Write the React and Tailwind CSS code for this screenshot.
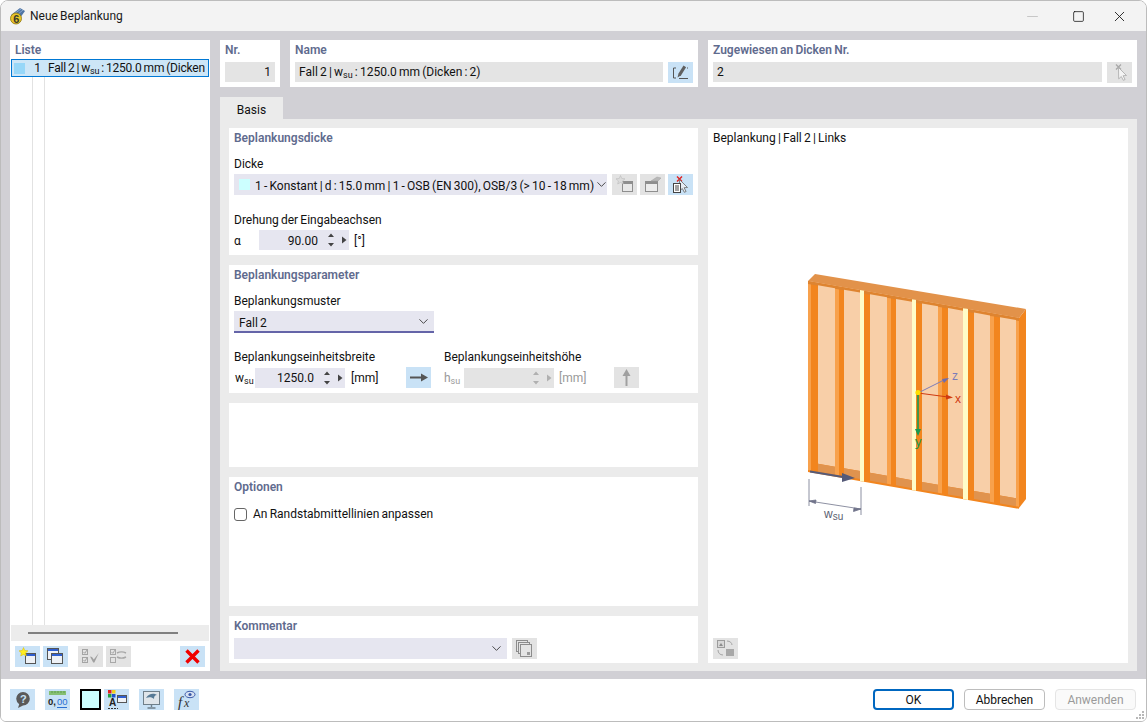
import React from "react";
import { ChevronDown, X, Minus, Square } from "lucide-react";

const y0 = (x) => 281 + (x - 808) * 0.1754;
const yb = (x) => 471 + (x - 808) * 0.1745;
const band = (a, b, t, e) =>
  `${a},${y0(a) + t} ${b},${y0(b) + t} ${b},${yb(b) + e} ${a},${yb(a) + e}`;
const recess = (a, b) =>
  `${a},${yb(a) - 9} ${b},${yb(b) - 9} ${b},${yb(b) - 1} ${a},${yb(a) - 1}`;

const sheets = [
  [818, 835],
  [844, 860],
  [870, 887],
  [896, 912],
  [922, 938],
  [948, 963],
  [974, 990],
  [1000, 1016],
];
const lightStuds = [
  [808, 811],
  [835, 839],
  [887, 891],
  [938, 942],
  [990, 994],
  [1016, 1019],
];
const gaps = [
  [860, 864],
  [912, 916],
  [963, 968],
];

const Wall = () => (
  <svg width="250" height="270" viewBox="793 260 250 270">
    <polygon points={band(808, 1019, 0, 1)} fill="#f2851e" />
    <polygon points="1019,318 1026,309 1026,499 1019,508" fill="#f2851e" />
    <polygon points="808,281 815,274 1026,309 1019,318" fill="#e2924a" />
    <polygon points="808,281 1019,318 1019,321 808,284" fill="#de8430" />
    {lightStuds.map(([a, b]) => (
      <polygon key={a} points={band(a, b, 3, -1)} fill="#f8a14c" />
    ))}
    {sheets.map(([a, b]) => (
      <g key={a}>
        <polygon points={band(a, b, 2.5, -9)} fill="#f8cfa8" />
        <polygon points={recess(a, b)} fill="#e0934e" />
      </g>
    ))}
    {gaps.map(([a, b]) => (
      <polygon key={a} points={band(a, b, 0, 1)} fill="#fffcc8" />
    ))}
    <line x1="810" y1="471.5" x2="846" y2="477.5" stroke="#555a78" strokeWidth="2" />
    <polygon points="842,473 855,478 842,482" fill="#555a78" />
    <line x1="918" y1="393" x2="946" y2="379" stroke="#7c7cb8" strokeWidth="1" />
    <polygon points="949,378 942,379 944,383" fill="#6c6cae" />
    <text x="952" y="380" fontSize="12" fill="#7c7cb8" fontFamily="Liberation Sans, sans-serif">z</text>
    <line x1="918" y1="393" x2="948" y2="397" stroke="#d03a10" strokeWidth="1" />
    <polygon points="953,397.5 946,394.5 946,399.5" fill="#d03a10" />
    <text x="955" y="403" fontSize="12" fill="#d03a10" fontFamily="Liberation Sans, sans-serif">x</text>
    <line x1="918" y1="393" x2="918" y2="430" stroke="#1a9a50" strokeWidth="1.6" />
    <polygon points="915,429 921,429 918,436" fill="#1a9a50" />
    <text x="915" y="446" fontSize="13" fill="#1a9a50" fontFamily="Liberation Sans, sans-serif">y</text>
    <circle cx="918" cy="392.5" r="2.6" fill="#ffdf00" />
    <g stroke="#70738a" strokeWidth="0.8" fill="#70738a">
      <line x1="809" y1="479" x2="809" y2="506" />
      <line x1="861" y1="487" x2="861" y2="515" />
      <line x1="809" y1="501" x2="861" y2="509" />
      <polygon points="809,501 816,500 815.5,503.5" />
      <polygon points="861,509 854,508 853.5,511.5" />
    </g>
    <text x="824" y="518" fontSize="12" fill="#5c5f72" fontFamily="Liberation Sans, sans-serif">
      w<tspan fontSize="10" dy="1.5">su</tspan>
    </text>
  </svg>
);

const Ic = ({ children }) => (
  <svg width="25" height="21" viewBox="0 0 25 21">
    {children}
  </svg>
);

const NewWin = ({ gray }) => (
  <Ic>
    <rect x="10.5" y="7.5" width="10" height="10" fill={gray ? "#e8e8e8" : "#eef1f6"} stroke={gray ? "#8e8e8e" : "#555"} />
    <rect x="11" y="8" width="9" height="2" fill={gray ? "#8e8e8e" : "#2f5fd0"} />
    <path
      d="M8.5 1.5l1.3 3 3.2.3-2.4 2.1.7 3.1-2.8-1.6-2.8 1.6.7-3.1L4 4.8l3.2-.3z"
      fill={gray ? "#dcdcdc" : "#ffee20"}
      stroke={gray ? "#b4b4b4" : "#d8b800"}
      strokeWidth="0.5"
    />
  </Ic>
);

const CopyWin = () => (
  <Ic>
    <rect x="4.5" y="2.5" width="11" height="11" fill="#eef1f6" stroke="#555" />
    <rect x="5" y="3" width="10" height="2" fill="#2f5fd0" />
    <rect x="8.5" y="7.5" width="11" height="10" fill="#eef1f6" stroke="#555" />
    <rect x="9" y="8" width="10" height="2" fill="#2f5fd0" />
  </Ic>
);

const CheckAll = () => (
  <Ic>
    <g fill="none" stroke="#a4a4a4">
      <rect x="4.5" y="3.5" width="5" height="5" />
      <rect x="4.5" y="11.5" width="5" height="5" />
      <path d="M5.5 6l1.3 1.3 2.4-3.6M5.5 14l1.3 1.3 2.4-3.6" />
    </g>
    <path d="M12 10.5l2 .5 1.8 2.4 5-6.4-4.4 9.5h-1.2z" fill="#a0a0a0" />
  </Ic>
);

const CheckSwap = () => (
  <Ic>
    <g fill="none" stroke="#a8a8a8">
      <rect x="4.5" y="3.5" width="5" height="5" />
      <rect x="4.5" y="11.5" width="5" height="5" />
      <path d="M5.5 6l1.3 1.3 2.4-3.6" />
      <path d="M11 7c3-1.5 6-1.5 9 0M20 11c-3 1.5-6 1.5-9 0" strokeWidth="1.4" />
    </g>
  </Ic>
);

const RedX = () => (
  <Ic>
    <path d="M6.5 4.5l12 12M18.5 4.5l-12 12" stroke="#f00000" strokeWidth="3.4" />
  </Ic>
);

const Pencil = () => (
  <Ic>
    <path d="M8 6H5.5v10H8" fill="none" stroke="#555" />
    <path d="M11 16.5h9" stroke="#555" />
    <path d="M9.5 15.5l1-4 5-8 2.6 1.8-5 8z" fill="#606060" />
    <path d="M19 6h1" stroke="#555" />
  </Ic>
);

const CursorX = ({ red }) => (
  <g>
    <path d="M9 2.5l5 5M14 2.5l-5 5" stroke={red ? "#e02020" : "#a8a8a8"} strokeWidth="1.4" />
    <path d="M11.5 5.5l8 8-3.4.2 2 3.8-1.8.8-2-3.8-2.6 2.4z" fill={red ? "#e6edf5" : "#f4f4f4"} stroke={red ? "#666" : "#a8a8a8"} strokeWidth="0.8" />
  </g>
);

const CursorBtn = () => (
  <Ic>
    <CursorX />
  </Ic>
);

const PickDoc = () => (
  <Ic>
    <CursorX red />
    <rect x="5.5" y="9.5" width="7" height="9" fill="#fff" stroke="#444" />
    <path d="M7 12h4M7 14h4M7 16h4" stroke="#444" />
  </Ic>
);

const EditWin = () => (
  <Ic>
    <rect x="5.5" y="7.5" width="12" height="10" fill="#ececec" stroke="#8e8e8e" />
    <rect x="6" y="8" width="11" height="2" fill="#8e8e8e" />
    <path d="M11 7l6-4 4 1-3 3z" fill="#b8b8b8" stroke="#a0a0a0" strokeWidth="0.5" />
  </Ic>
);

const ArrowRight = () => (
  <Ic>
    <path d="M4 10.5h13" stroke="#555" strokeWidth="2" />
    <path d="M15 6.5l7 4-7 4z" fill="#555" />
  </Ic>
);

const ArrowUp = () => (
  <Ic>
    <path d="M12.5 7v12" stroke="#a0a0a0" strokeWidth="2" />
    <path d="M8.5 9l4-7 4 7z" fill="#a0a0a0" />
  </Ic>
);

const Stack = () => (
  <Ic>
    <g fill="#e4e4e4" stroke="#8c8c8c">
      <rect x="4.5" y="2.5" width="11" height="11" />
      <rect x="6.5" y="4.5" width="11" height="11" />
      <rect x="8.5" y="6.5" width="11" height="12" />
    </g>
    <rect x="15" y="14" width="3" height="3" fill="#9a9a9a" />
  </Ic>
);

const Views = () => (
  <Ic>
    <rect x="4.5" y="2.5" width="7" height="7" fill="#d8d8d8" stroke="#9c9c9c" />
    <path d="M6 8l2-3 2 3z" fill="#8c8c8c" />
    <path d="M14 3c3 0 5 2 5 4M5 12c0 3 2 5 5 5" fill="none" stroke="#a4a4a4" />
    <rect x="13" y="11" width="8" height="7" fill="#a8a8a8" />
  </Ic>
);

const Help = () => (
  <Ic>
    <path d="M13 3a6.8 6.8 0 016.8 6.8A6.8 6.8 0 0113 16.6l-5 2.4 1.2-3.8a6.8 6.8 0 01-3-5.4A6.8 6.8 0 0113 3z" fill="#5a5a5a" />
    <text x="10" y="14" fontSize="11" fontWeight="700" fill="#c9e2f6" fontFamily="Liberation Sans, sans-serif">?</text>
  </Ic>
);

const Decimals = () => (
  <Ic>
    <rect x="4" y="2" width="17" height="4" fill="#86bf72" />
    <path d="M7 2v2M10 2v2M13 2v2M16 2v2M19 2v2" stroke="#5f9c4c" />
    <text x="3" y="16" fontSize="9.5" fontWeight="700" fill="#222" fontFamily="Liberation Sans, sans-serif">0,</text>
    <text x="12" y="16" fontSize="9.5" fill="#2a6fd0" fontFamily="Liberation Sans, sans-serif">00</text>
    <path d="M12 18.5h10" stroke="#2a6fd0" />
  </Ic>
);

const Legend = () => (
  <Ic>
    <rect x="4" y="1" width="3.5" height="3.5" fill="#e02020" />
    <rect x="8" y="1" width="3.5" height="3.5" fill="#f0d020" />
    <rect x="4" y="5" width="3.5" height="3.5" fill="#20a040" />
    <rect x="8" y="5" width="3.5" height="3.5" fill="#2050d0" />
    <text x="5" y="17" fontSize="10" fontWeight="700" fill="#222" fontFamily="Liberation Sans, sans-serif">A</text>
    <rect x="13.5" y="6.5" width="9" height="7" fill="#eef1f6" stroke="#555" />
    <rect x="14" y="7" width="8" height="2" fill="#2f5fd0" />
    <path d="M4 19.5h10" stroke="#333" strokeDasharray="2 1" />
  </Ic>
);

const Screen = () => (
  <Ic>
    <rect x="4.5" y="2.5" width="16" height="13" fill="#dfe5ea" stroke="#6f7f8a" />
    <path d="M7 9c3-5 8-5 11-3-2 0-3 1-3 4-2-2-5-2-8-1z" fill="#567a96" />
    <path d="M12.5 16v2M8.5 19h8" stroke="#6f7f8a" strokeWidth="1.4" />
  </Ic>
);

const FxEye = () => (
  <Ic>
    <text x="4" y="18" fontSize="15" fontStyle="italic" fill="#333" fontFamily="Liberation Serif, serif">f</text>
    <text x="10" y="18" fontSize="12" fontStyle="italic" fill="#333" fontFamily="Liberation Serif, serif">x</text>
    <ellipse cx="16" cy="5.5" rx="5" ry="3.2" fill="#d8e2f2" stroke="#3a58a8" />
    <circle cx="16" cy="5.5" r="1.6" fill="#3a58a8" />
  </Ic>
);

const AppIcon = () => (
  <svg width="17" height="18" viewBox="0 0 17 18" className="shrink-0">
    <path d="M2 8L11 1l5 3-5 7z" fill="#4f75a6" />
    <path d="M5 7l7-5M8 8l6-5" stroke="#a8c0de" strokeWidth="0.7" />
    <circle cx="7" cy="11.5" r="5.5" fill="#e8c52a" stroke="#8c7410" strokeWidth="0.8" />
    <text x="4.2" y="15.5" fontSize="11" fontWeight="700" fill="#3a3a2a" fontFamily="Liberation Sans, sans-serif">6</text>
  </svg>
);

const IconBtn = ({ blue, children, className = "" }) => (
  <div className={`w-[25px] h-[21px] shrink-0 ${blue ? "bg-[#c9e2f6]" : "bg-[#e3e3e3]"} ${className}`}>
    {children}
  </div>
);

const Panel = ({ className = "", children }) => (
  <div className={`bg-white ${className}`}>{children}</div>
);

const Heading = ({ children, className = "" }) => (
  <div className={`relative top-px font-semibold text-[#5f6b8e] leading-[16px] ${className}`}>{children}</div>
);

const Label = ({ children, className = "" }) => (
  <div className={`relative top-px leading-[16px] ${className}`}>{children}</div>
);

const Su = ({ base }) => (
  <span>
    {base}
    <span className="text-[9px] relative top-[2px]">su</span>
  </span>
);

const Field = ({ className = "", children }) => (
  <div className={`h-[20px] bg-[#e4e4e4] flex items-center px-[4px] ${className}`}>{children}</div>
);

const Spin = ({ value, disabled, nudge, className = "" }) => (
  <div className={`w-[90px] h-[20px] shrink-0 flex items-center ${disabled ? "bg-[#e4e4e4]" : "bg-[#e6e6f0]"} ${className}`}>
    <span className={`flex-1 text-right ${nudge ? "relative top-px" : ""}`}>{value}</span>
    <svg width="34" height="20" viewBox="0 0 34 20" className="shrink-0 -ml-[3px]">
      <g fill={disabled ? "#b0b0b0" : "#444"}>
        <path d="M13 7l3-3.5 3 3.5zM13 13l3 3.5 3-3.5z" />
        <path d="M27 6.5l4.5 3.5-4.5 3.5z" />
      </g>
    </svg>
  </div>
);

export default function App() {
  return (
    <div className="w-[1147px] h-[722px] overflow-hidden bg-white rounded-t-[8px] rounded-b-[6px] border border-[#bcbcbc] flex flex-col text-[12px] [word-spacing:-0.8px] text-[#111] font-['Roboto',sans-serif] relative">
      {/* title bar */}
      <div className="h-[30px] shrink-0 bg-[#f3f3f3] flex items-center pl-[8px] pr-[18px]">
        <AppIcon />
        <span className="ml-[4px] text-[#1a1a1a]">Neue Beplankung</span>
        <Minus size={17} strokeWidth={1} className="ml-auto text-[#b4b4b4]" />
        <Square size={13} strokeWidth={1.4} className="ml-[31px] text-[#111]" />
        <X size={17} strokeWidth={1.2} className="ml-[26px] text-[#111]" />
      </div>

      {/* body */}
      <div className="h-[648px] shrink-0 bg-[#d1d0d5] flex pt-[9px] px-[9px] pb-[8px] gap-[10px]">
        {/* list */}
        <div className="w-[200px] h-[631px] bg-white flex flex-col">
          <Heading className="px-[5px] pt-[1px] pb-[2px]">Liste</Heading>
          <div className="flex-1 relative">
            <div className="absolute top-0 bottom-0 left-[22px] w-px bg-[#e2e2e2]" />
            <div className="absolute top-0 bottom-0 left-[34px] w-px bg-[#e2e2e2]" />
            <div className="relative h-[18px] mx-px bg-[#cde6f7] border border-[#0078d4] flex items-center whitespace-nowrap">
              <div className="w-[11px] h-[11px] bg-[#97d7f8] ml-[2px] shrink-0" />
              <div className="w-[16px] text-right shrink-0">1</div>
              <div className="ml-[7px] tracking-[-0.2px]">
                Fall 2 | <Su base="w" /> : 1250.0 mm (Dicken
              </div>
            </div>
          </div>
          <div className="h-[16px] mx-px bg-[#ececec] flex items-center pl-[17px]">
            <div className="w-[150px] h-[2px] bg-[#808080]" />
          </div>
          <div className="h-[30px] flex items-start pt-[5px] pl-[5px]">
            <IconBtn blue><NewWin /></IconBtn>
            <IconBtn blue className="ml-[3px]"><CopyWin /></IconBtn>
            <IconBtn className="ml-[10px]"><CheckAll /></IconBtn>
            <IconBtn className="ml-[3px]"><CheckSwap /></IconBtn>
            <IconBtn blue className="ml-[49px]"><RedX /></IconBtn>
          </div>
        </div>

        {/* right side */}
        <div className="w-[917px] flex flex-col">
          <div className="flex gap-[10px] h-[47px]">
            <Panel className="w-[60px] px-[5px]">
              <Heading className="pt-[1px] pb-[5px]">Nr.</Heading>
              <Field className="justify-end">1</Field>
            </Panel>
            <Panel className="w-[408px] px-[5px]">
              <Heading className="pt-[1px] pb-[5px]">Name</Heading>
              <div className="flex gap-[5px]">
                <Field className="flex-1 whitespace-nowrap">
                  <span>Fall 2 | <Su base="w" /> : 1250.0 mm (Dicken : 2)</span>
                </Field>
                <IconBtn blue><Pencil /></IconBtn>
              </div>
            </Panel>
            <Panel className="w-[429px] px-[5px]">
              <Heading className="pt-[1px] pb-[5px]">Zugewiesen an Dicken Nr.</Heading>
              <div className="flex gap-[5px]">
                <Field className="flex-1">2</Field>
                <IconBtn><CursorBtn /></IconBtn>
              </div>
            </Panel>
          </div>

          <div className="mt-[10px] h-[22px] w-[63px] bg-[#ebebeb] flex items-center justify-center pt-[4px]">Basis</div>

          <div className="h-[552px] bg-[#ebebeb] flex gap-[10px] p-[9px] pb-[8px]">
            <div className="w-[469px] flex flex-col gap-[10px]">
              <Panel className="h-[127px] px-[5px] pt-[1px]">
                <Heading className="pb-[10px]">Beplankungsdicke</Heading>
                <Label className="pb-[3px]">Dicke</Label>
                <div className="flex">
                  <div className="w-[373px] h-[21px] bg-[#e6e6f0] flex items-center pl-[5px] pr-[3px] whitespace-nowrap">
                    <div className="w-[11px] h-[11px] bg-[#ccffff] mr-[5px] shrink-0" />
                    <span className="flex-1 relative top-px">1 - Konstant | d : 15.0 mm | 1 - OSB (EN 300), OSB/3 (&gt; 10 - 18 mm)</span>
                    <ChevronDown size={15} strokeWidth={1.4} className="text-[#333] shrink-0" />
                  </div>
                  <IconBtn className="ml-[5px]"><NewWin gray /></IconBtn>
                  <IconBtn className="ml-[3px]"><EditWin /></IconBtn>
                  <IconBtn blue className="ml-[3px]"><PickDoc /></IconBtn>
                </div>
                <Label className="pt-[16px] pb-[3px]">Drehung der Eingabeachsen</Label>
                <div className="flex items-center h-[20px]">
                  <span className="w-[25px] relative top-px">α</span>
                  <Spin value="90.00" nudge />
                  <span className="ml-[5px] relative top-px">[°]</span>
                </div>
              </Panel>

              <Panel className="h-[128px] px-[5px] pt-px">
                <Heading className="pb-[10px]">Beplankungsparameter</Heading>
                <Label className="pb-[3px]">Beplankungsmuster</Label>
                <div className="w-[200px] h-[22px] bg-[#e6e6f0] border-b-2 border-[#6464a8] flex items-center justify-between pl-[5px] pr-[3px]">
                  <span className="relative top-[2px]">Fall 2</span>
                  <ChevronDown size={15} strokeWidth={1.4} className="text-[#333]" />
                </div>
                <div className="flex pt-[15px] leading-[16px] relative top-px">
                  <div className="w-[210px]">Beplankungseinheitsbreite</div>
                  <div>Beplankungseinheitshöhe</div>
                </div>
                <div className="flex items-center h-[21px] mt-[3px]">
                  <span className="w-[21px] pl-px"><Su base="w" /></span>
                  <Spin value="1250.0" />
                  <span className="w-[61px] pl-[6px]">[mm]</span>
                  <IconBtn blue><ArrowRight /></IconBtn>
                  <span className="w-[20px] ml-[13px] text-[#999]"><Su base="h" /></span>
                  <Spin value="" disabled />
                  <span className="w-[60px] pl-[5px] text-[#999]">[mm]</span>
                  <IconBtn><ArrowUp /></IconBtn>
                </div>
              </Panel>

              <Panel className="h-[64px]" />

              <Panel className="h-[129px] px-[5px] pt-px">
                <Heading className="pb-[14px]">Optionen</Heading>
                <label className="flex items-center gap-[6px] leading-[16px] -mt-[2px]">
                  <span className="w-[13px] h-[13px] rounded-[3px] border border-[#666] bg-white" />
                  An Randstabmittellinien anpassen
                </label>
              </Panel>

              <Panel className="h-[47px] px-[5px] pt-px">
                <Heading className="pb-[5px]">Kommentar</Heading>
                <div className="flex gap-[5px]">
                  <div className="w-[273px] h-[21px] bg-[#e6e6f0] flex items-center justify-end pr-[3px]">
                    <ChevronDown size={15} strokeWidth={1.4} className="text-[#333]" />
                  </div>
                  <IconBtn><Stack /></IconBtn>
                </div>
              </Panel>
            </div>

            <Panel className="w-[420px] flex flex-col px-[5px] pb-[4px]">
              <div className="leading-[20px]">Beplankung | Fall 2 | Links</div>
              <div className="flex-1 flex justify-center items-start pt-[112px]">
                <Wall />
              </div>
              <IconBtn><Views /></IconBtn>
            </Panel>
          </div>
        </div>
      </div>

      {/* footer */}
      <div className="flex-1 bg-white flex items-start pt-[10px] pl-[9px] pr-[10px]">
        <IconBtn blue><Help /></IconBtn>
        <IconBtn blue className="ml-[10px]"><Decimals /></IconBtn>
        <div className="w-[21px] h-[21px] ml-[10px] bg-[#ccffff] border-2 border-black" />
        <IconBtn blue className="ml-[3px]"><Legend /></IconBtn>
        <IconBtn blue className="ml-[10px]"><Screen /></IconBtn>
        <IconBtn blue className="ml-[10px]"><FxEye /></IconBtn>
        <div className="ml-auto flex gap-[10px]">
          <div className="w-[81px] h-[21px] rounded-[4px] border-2 border-[#0067c0] flex items-center justify-center">OK</div>
          <div className="w-[81px] h-[21px] rounded-[4px] border border-[#bdbdbd] flex items-center justify-center">Abbrechen</div>
          <div className="w-[81px] h-[21px] rounded-[4px] border border-[#e5e5e5] bg-[#fafafa] text-[#9a9a9a] flex items-center justify-center">Anwenden</div>
        </div>
      </div>
      <svg width="10" height="10" viewBox="0 0 10 10" className="absolute right-[1px] bottom-[1px]">
        <g fill="#b8b8b8">
          <rect x="7" y="1" width="2" height="2" />
          <rect x="4" y="4" width="2" height="2" />
          <rect x="7" y="4" width="2" height="2" />
          <rect x="1" y="7" width="2" height="2" />
          <rect x="4" y="7" width="2" height="2" />
          <rect x="7" y="7" width="2" height="2" />
        </g>
      </svg>
    </div>
  );
}
